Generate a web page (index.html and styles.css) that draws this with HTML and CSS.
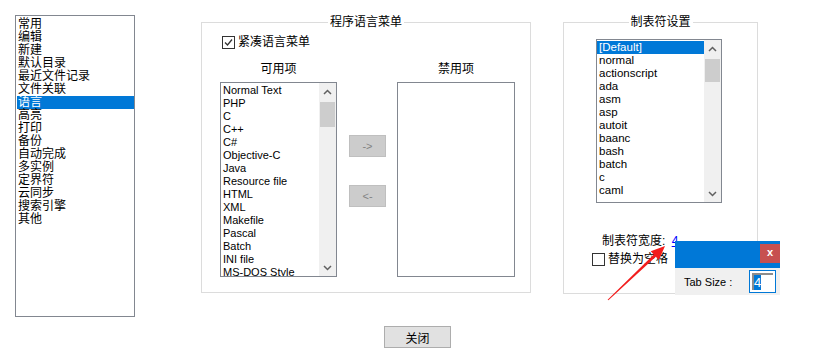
FILE: index.html
```html
<!DOCTYPE html>
<html lang="zh-CN">

<head>
  <meta charset="UTF-8">
  <title>首选项</title>
  <link rel="stylesheet" href="styles.css">
</head>

<body>
  <div class="dialog">
    <div class="top">
      <!-- 左侧分类 -->
      <ul class="nav">
        <li>常用</li>
        <li>编辑</li>
        <li>新建</li>
        <li>默认目录</li>
        <li>最近文件记录</li>
        <li>文件关联</li>
        <li class="selected">语言</li>
        <li>高亮</li>
        <li>打印</li>
        <li>备份</li>
        <li>自动完成</li>
        <li>多实例</li>
        <li>定界符</li>
        <li>云同步</li>
        <li>搜索引擎</li>
        <li>其他</li>
      </ul>

      <!-- 程序语言菜单 -->
      <section class="group lang-group">
        <span class="group-title">程序语言菜单</span>
        <label class="check compact">
          <span class="box"><svg width="11" height="11" viewBox="0 0 11 11"><polyline points="2,5.5 4.5,8 9,2.5" fill="none" stroke="#333" stroke-width="1.3"/></svg></span>
          紧凑语言菜单
        </label>
        <div class="lists">
          <div class="col">
            <div class="col-head">可用项</div>
            <div class="listbox avail">
              <ul class="items">
                <li>Normal Text</li>
                <li>PHP</li>
                <li>C</li>
                <li>C++</li>
                <li>C#</li>
                <li>Objective-C</li>
                <li>Java</li>
                <li>Resource file</li>
                <li>HTML</li>
                <li>XML</li>
                <li>Makefile</li>
                <li>Pascal</li>
                <li>Batch</li>
                <li>INI file</li>
                <li>MS-DOS Style</li>
              </ul>
              <div class="scroll">
                <div class="sb-btn"><svg width="9" height="6" viewBox="0 0 9 6"><polyline points="1,5 4.5,1.5 8,5" fill="none" stroke="#606060" stroke-width="1.5"/></svg></div>
                <div class="sb-thumb avail-thumb"></div>
                <div class="sb-track"></div>
                <div class="sb-btn"><svg width="9" height="6" viewBox="0 0 9 6"><polyline points="1,1 4.5,4.5 8,1" fill="none" stroke="#606060" stroke-width="1.5"/></svg></div>
              </div>
            </div>
          </div>
          <div class="move">
            <button disabled>-&gt;</button>
            <button disabled>&lt;-</button>
          </div>
          <div class="col">
            <div class="col-head">禁用项</div>
            <div class="listbox blocked"></div>
          </div>
        </div>
      </section>

      <!-- 制表符设置 -->
      <section class="group tab-group">
        <span class="group-title">制表符设置</span>
        <div class="listbox tab-list">
          <ul class="items">
            <li class="selected">[Default]</li>
            <li>normal</li>
            <li>actionscript</li>
            <li>ada</li>
            <li>asm</li>
            <li>asp</li>
            <li>autoit</li>
            <li>baanc</li>
            <li>bash</li>
            <li>batch</li>
            <li>c</li>
            <li>caml</li>
          </ul>
          <div class="scroll">
            <div class="sb-btn"><svg width="9" height="6" viewBox="0 0 9 6"><polyline points="1,5 4.5,1.5 8,5" fill="none" stroke="#606060" stroke-width="1.5"/></svg></div>
            <div class="sb-thumb tab-thumb"></div>
            <div class="sb-track"></div>
            <div class="sb-btn"><svg width="9" height="6" viewBox="0 0 9 6"><polyline points="1,1 4.5,4.5 8,1" fill="none" stroke="#606060" stroke-width="1.5"/></svg></div>
          </div>
        </div>
        <div class="tab-width">制表符宽度: <a href="#">4</a></div>
        <label class="check spaces">
          <span class="box"></span>
          替换为空格
        </label>
      </section>
    </div>

    <div class="footer">
      <button class="close-btn">关闭</button>
    </div>

    <!-- 标注箭头 -->
    <svg class="arrow" width="840" height="358" viewBox="0 0 840 358">
      <polygon points="608.4,300.3 655.8,256.7 658.9,259.9 665,246 650.7,251.3 653.8,254.5 607.6,299.7" fill="#f21d1d"/>
    </svg>

    <!-- Tab Size 弹窗 -->
    <div class="popup">
      <div class="popup-bar">
        <span class="popup-close">x</span>
      </div>
      <div class="popup-body">
        <span>Tab Size :</span>
        <span class="size-input"><span class="sel">4</span></span>
      </div>
    </div>
  </div>
</body>

</html>
```

FILE: styles.css
```css
/* 全局 */
body {
  margin: 0;
  padding: 0;
  background-color: #fff;
  font-family: "Liberation Sans", "Noto Sans CJK SC", sans-serif;
  font-size: 12px;
  color: #000;
}

ul {
  list-style-type: none;
  margin: 0;
  padding: 0;
}

.dialog {
  position: relative;
  width: 840px;
  height: 358px;
  overflow: hidden;
}

.top {
  display: flex;
  align-items: flex-start;
  padding: 15px 0 0 15px;
}

/* 左侧分类列表 */
.nav {
  box-sizing: border-box;
  width: 120px;
  height: 302px;
  border: 1px solid #828790;
  padding: 2px 0 0 1px;
}

.nav li {
  height: 13px;
  line-height: 13px;
  padding-left: 1px;
  white-space: nowrap;
}

.nav li.selected,
.items li.selected {
  background-color: #0078d7;
  color: #fff;
}

/* 分组框 */
.group {
  position: relative;
  box-sizing: border-box;
  border: 1px solid #dcdcdc;
  margin-top: 7px;
}

.group-title {
  position: absolute;
  top: -9px;
  left: 50%;
  transform: translateX(-50%);
  background-color: #fff;
  padding: 0 2px;
  line-height: 16px;
  white-space: nowrap;
}

.lang-group {
  width: 330px;
  height: 271px;
  margin-left: 66px;
}

.tab-group {
  width: 195px;
  height: 272px;
  margin-left: 32px;
}

/* 复选框 */
.check {
  display: flex;
  align-items: center;
  gap: 3px;
  height: 13px;
  line-height: 13px;
}

.check .box {
  box-sizing: border-box;
  width: 13px;
  height: 13px;
  border: 1px solid #333;
  background-color: #fff;
  display: flex;
  align-items: center;
  justify-content: center;
}

.compact {
  margin: 13px 0 0 20px;
}

.spaces {
  margin: 5px 0 0 28px;
}

/* 列表区 */
.lists {
  display: flex;
  padding-left: 18px;
  margin-top: 13px;
}

.col-head {
  height: 14px;
  line-height: 14px;
  margin-bottom: 6px;
  text-align: center;
}

.listbox {
  box-sizing: border-box;
  display: flex;
  border: 1px solid #828790;
  background-color: #fff;
}

.items {
  flex: 1;
  overflow: hidden;
  padding-top: 1px;
}

.items li {
  height: 13px;
  line-height: 13px;
  font-size: 11px;
  padding-left: 2px;
  white-space: nowrap;
}

.avail {
  width: 117px;
  height: 195px;
}

.blocked {
  width: 118px;
  height: 195px;
}

.tab-list {
  width: 126px;
  height: 164px;
  margin: 16px 0 0 32px;
}

.tab-list .items li {
  font-size: 11.5px;
}

/* 滚动条 */
.scroll {
  width: 17px;
  display: flex;
  flex-direction: column;
  background-color: #f0f0f0;
}

.sb-btn {
  height: 17px;
  display: flex;
  align-items: center;
  justify-content: center;
}

.sb-thumb {
  margin: 2px 1px 0;
  background-color: #cdcdcd;
}

.avail-thumb {
  height: 25px;
}

.tab-thumb {
  height: 23px;
}

.sb-track {
  flex: 1;
}

/* 移动按钮 */
.move {
  display: flex;
  flex-direction: column;
  gap: 28px;
  width: 37px;
  margin: 73px 11px 0 12px;
}

.move button {
  box-sizing: border-box;
  width: 37px;
  height: 22px;
  padding: 0;
  border: 1px solid #bfbfbf;
  background-color: #cccccc;
  color: #838383;
  font-family: "Liberation Sans", sans-serif;
  font-size: 11px;
}

/* 制表符宽度 */
.tab-width {
  margin: 31px 0 0 38px;
  line-height: 14px;
  white-space: nowrap;
}

.tab-width a {
  margin-left: 3px;
  color: #0000ff;
  text-decoration: underline;
}

/* 底部按钮 */
.footer {
  padding-left: 384px;
  margin-top: 9px;
}

.close-btn {
  box-sizing: border-box;
  width: 67px;
  height: 22px;
  padding: 0;
  border: 1px solid #adadad;
  background-color: #e1e1e1;
  font-family: "Noto Sans CJK SC", sans-serif;
  font-size: 12px;
  color: #000;
}

/* 标注箭头 */
.arrow {
  position: absolute;
  left: 0;
  top: 0;
  pointer-events: none;
}

/* Tab Size 弹窗 */
.popup {
  position: absolute;
  left: 675px;
  top: 241px;
  width: 105px;
}

.popup-bar {
  position: relative;
  height: 27px;
  background-color: #0078d7;
}

.popup-close {
  position: absolute;
  right: 0;
  top: 3px;
  width: 20px;
  height: 19px;
  line-height: 17px;
  background-color: #c75050;
  color: #fff;
  font-size: 11px;
  font-weight: bold;
  text-align: center;
}

.popup-body {
  display: flex;
  align-items: center;
  justify-content: space-between;
  height: 27px;
  padding: 0 4px 0 9px;
  background-color: #f0f0f0;
  font-size: 11px;
}

.size-input {
  box-sizing: border-box;
  width: 27px;
  height: 23px;
  border: 1px solid #0078d7;
  padding: 2px;
  background-color: #fff;
  display: flex;
}

.size-input .sel {
  box-sizing: border-box;
  flex: 1;
  border-top: 2px solid #8c8c8c;
  border-left: 2px solid #8c8c8c;
  font-size: 13px;
  line-height: 15px;
}

.size-input .sel::first-letter {
  background-color: #0078d7;
  color: #fff;
}
```
